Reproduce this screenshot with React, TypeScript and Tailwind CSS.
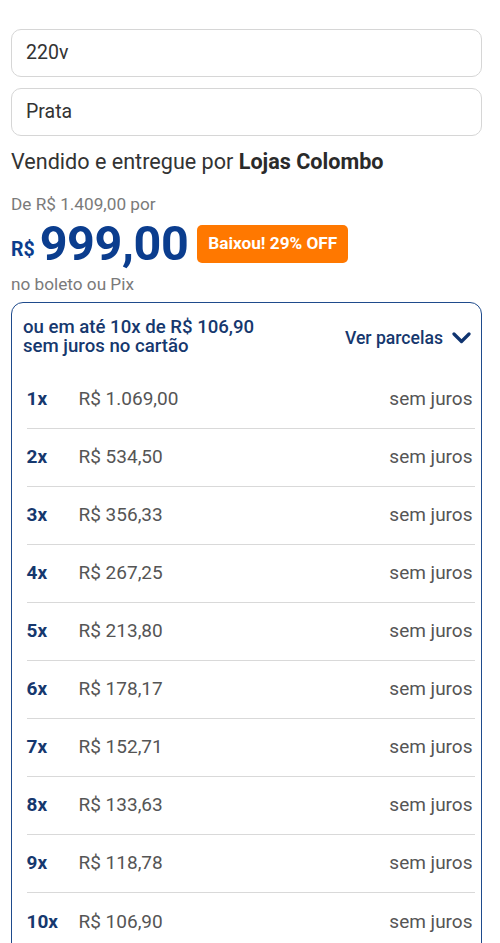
import React from "react";

const rows: [string, string][] = [
  ["1x", "R$ 1.069,00"],
  ["2x", "R$ 534,50"],
  ["3x", "R$ 356,33"],
  ["4x", "R$ 267,25"],
  ["5x", "R$ 213,80"],
  ["6x", "R$ 178,17"],
  ["7x", "R$ 152,71"],
  ["8x", "R$ 133,63"],
  ["9x", "R$ 118,78"],
  ["10x", "R$ 106,90"],
];

export default function App() {
  return (
    <div
      className="w-[500px] min-h-[943px] bg-white pl-[11px] pt-[29px] overflow-hidden"
      style={{ fontFamily: "Roboto, 'Noto Sans', sans-serif" }}
    >
      <div className="w-[471px] flex flex-col">
        <div className="h-[48px] rounded-[10px] border border-[#d6d6d6] flex items-center pl-[14px] text-[19.5px] text-[#333333]">
          220v
        </div>
        <div className="mt-[11px] h-[48px] rounded-[10px] border border-[#d6d6d6] flex items-center pl-[14px] text-[19.5px] text-[#333333]">
          Prata
        </div>
        <div className="mt-[13px] text-[21.6px] leading-[26px] text-[#333333]">
          Vendido e entregue por <span className="font-bold text-[#2a2a2a]">Lojas Colombo</span>
        </div>
        <div className="mt-[19px] text-[17.2px] leading-[20px] text-[#7a7a7a]">De R$ 1.409,00 por</div>
        <div className="mt-[10px] h-[40px] flex items-center">
          <span className="text-[19.5px] font-bold text-[#0b3d8e] mt-[12px]">R$</span>
          <span className="ml-[5px] text-[48.5px] leading-[40px] font-bold text-[#0b3d8e] tracking-[-0.4px]">999,00</span>
          <span className="ml-[9px] h-[38px] px-[11px] rounded-[5px] bg-[#ff7800] text-white text-[17.2px] font-bold flex items-center">
            Baixou! 29% OFF
          </span>
        </div>
        <div className="mt-[10px] text-[17.2px] leading-[20px] text-[#7a7a7a]">no boleto ou Pix</div>
        <div className="mt-[8px] rounded-[12px] border-[1.5px] border-[#1f4b8c] pb-[20px]">
          <div className="flex items-center justify-between pl-[11px] pr-[10px] pt-[14.5px] pb-[15.5px]">
            <div className="text-[18.6px] leading-[19px] font-medium text-[#16386e]">
              <div>ou em até 10x de R$ 106,90</div>
              <div>sem juros no cartão</div>
            </div>
            <div className="mt-[4px] flex items-center gap-[9px] text-[17.6px] font-medium text-[#16386e]">
              <span>Ver parcelas</span>
              <svg width="19" height="12" viewBox="0 0 19 12" fill="none">
                <path d="M2 2l7.5 7.5L17 2" stroke="#0f3470" strokeWidth="3.2" strokeLinecap="round" strokeLinejoin="round" />
              </svg>
            </div>
          </div>
          <div className="pl-[14.5px] pr-[6.5px]">
            {rows.map(([n, v], i) => (
              <div
                key={n}
                className={`h-[58px] flex items-center text-[19px] ${i < rows.length - 1 ? "border-b border-[#d9d9d9]" : ""}`}
              >
                <span className="w-[52px] font-bold text-[#16386e]">{n}</span>
                <span className="flex-1 text-[#555555]">{v}</span>
                <span className="text-[#555555] pr-[2px]">sem juros</span>
              </div>
            ))}
          </div>
        </div>
      </div>
    </div>
  );
}
